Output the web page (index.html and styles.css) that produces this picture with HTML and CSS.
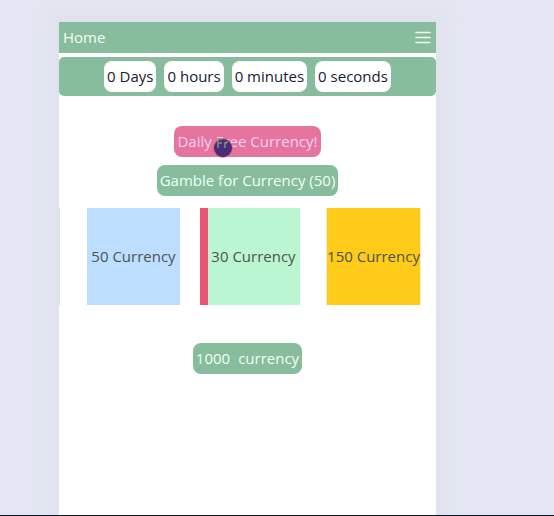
FILE: index.html
```html
<!DOCTYPE html>
<html lang="en">
<head>
<meta charset="utf-8">
<meta name="viewport" content="width=device-width, initial-scale=1">
<title>Daily Currency</title>
<link rel="stylesheet" href="styles.css">
</head>
<body>
<main class="panel">
  <nav class="navbar">
    <a class="home" href="#">Home</a>
    <button class="menu" type="button" aria-label="Menu">
      <svg width="18" height="14" viewBox="0 0 18 14" aria-hidden="true"><path d="M2 1.5H16M2 6.5H16M2 11.5H16" fill="none" stroke="currentColor" stroke-width="1.5" stroke-linecap="round"/></svg>
    </button>
  </nav>
  <section class="timer">
    <span class="unit">0 Days</span>
    <span class="unit">0 hours</span>
    <span class="unit">0 minutes</span>
    <span class="unit">0 seconds</span>
  </section>
  <section class="actions">
    <button class="action daily" type="button">Daily Free Currency!
      <svg class="pointer" width="22" height="22" viewBox="0 0 22 22" aria-hidden="true"><circle cx="11" cy="11" r="10" fill="#ee5277" opacity=".75"/><circle cx="11" cy="11" r="9" fill="#492d78"/><path d="M6 11V2H11M6 6H10M13 11V5M13 7Q14 5 16 5" fill="none" stroke="#7d8f87" stroke-width="1.5"/></svg>
    </button>
    <button class="action" type="button">Gamble for Currency (50)</button>
  </section>
  <section class="reel">
    <div class="track">
      <div class="card green"></div>
      <div class="card blue">50 Currency</div>
      <div class="card green marked">30 Currency</div>
      <div class="card gold">150 Currency</div>
    </div>
  </section>
  <p class="balance"><span>1000</span><span>currency</span></p>
</main>
</body>
</html>
```
FILE: styles.css
```css
* {
  box-sizing: border-box;
}

body {
  min-height: 100vh;
  margin: 0;
  padding: 22px 118px 0 59px;
  display: flex;
  overflow: hidden;
  background: #e4e7f3;
  border-bottom: 1px solid #10142b;
  font: 15px/23px "Open Sans", "Noto Sans", sans-serif;
}

button {
  border: 0;
  font: inherit;
  cursor: pointer;
}

.panel {
  flex: 1;
  min-width: 0;
  display: flex;
  flex-direction: column;
  align-items: center;
  background: #fff;
  box-shadow: 0 0 16px 14px #e0e3ee;
}

.navbar {
  align-self: stretch;
  display: flex;
  align-items: center;
  justify-content: space-between;
  padding: 4px;
  background: #87bc9d;
}

.home {
  color: #f4fff9;
  text-decoration: none;
}

.menu {
  display: flex;
  padding: 0;
  color: #f4fff9;
  background: none;
}

.timer {
  align-self: stretch;
  display: flex;
  justify-content: center;
  gap: 8px;
  margin-top: 4px;
  padding: 4px;
  border-radius: 5px;
  background: #87bc9d;
}

.unit {
  padding: 4px 3px;
  border-radius: 8px;
  background: #fff;
  color: #172031;
  white-space: nowrap;
}

.actions {
  display: flex;
  flex-direction: column;
  align-items: center;
  gap: 8px;
  margin-top: 30px;
}

.action,
.balance {
  padding: 4px 3px;
  border-radius: 8px;
  background: #87bc9d;
  color: #f0fff7;
  white-space: nowrap;
}

.daily {
  position: relative;
  background: #e5749e;
  color: #fbd0f6;
}

.pointer {
  position: absolute;
  left: 38px;
  top: 11px;
}

.reel {
  align-self: stretch;
  margin-top: 12px;
  overflow: hidden;
}

.track {
  display: flex;
  gap: 27px;
  margin-left: -92px;
}

.card {
  position: relative;
  flex: none;
  display: flex;
  align-items: center;
  justify-content: center;
  width: 93px;
  height: 97px;
  color: #4c5351;
  white-space: nowrap;
}

.green {
  background: #bbf6d2;
}

.blue {
  background: #bedeff;
}

.gold {
  background: #fdcb18;
  box-shadow: 0 0 0 1px #f5ead0;
}

.marked::before {
  content: "";
  position: absolute;
  top: 0;
  bottom: 0;
  right: 100%;
  width: 8px;
  margin-right: -1px;
  background: #eb5573;
}

.balance {
  display: flex;
  gap: 8px;
  margin: 38px 0 0;
}
```
